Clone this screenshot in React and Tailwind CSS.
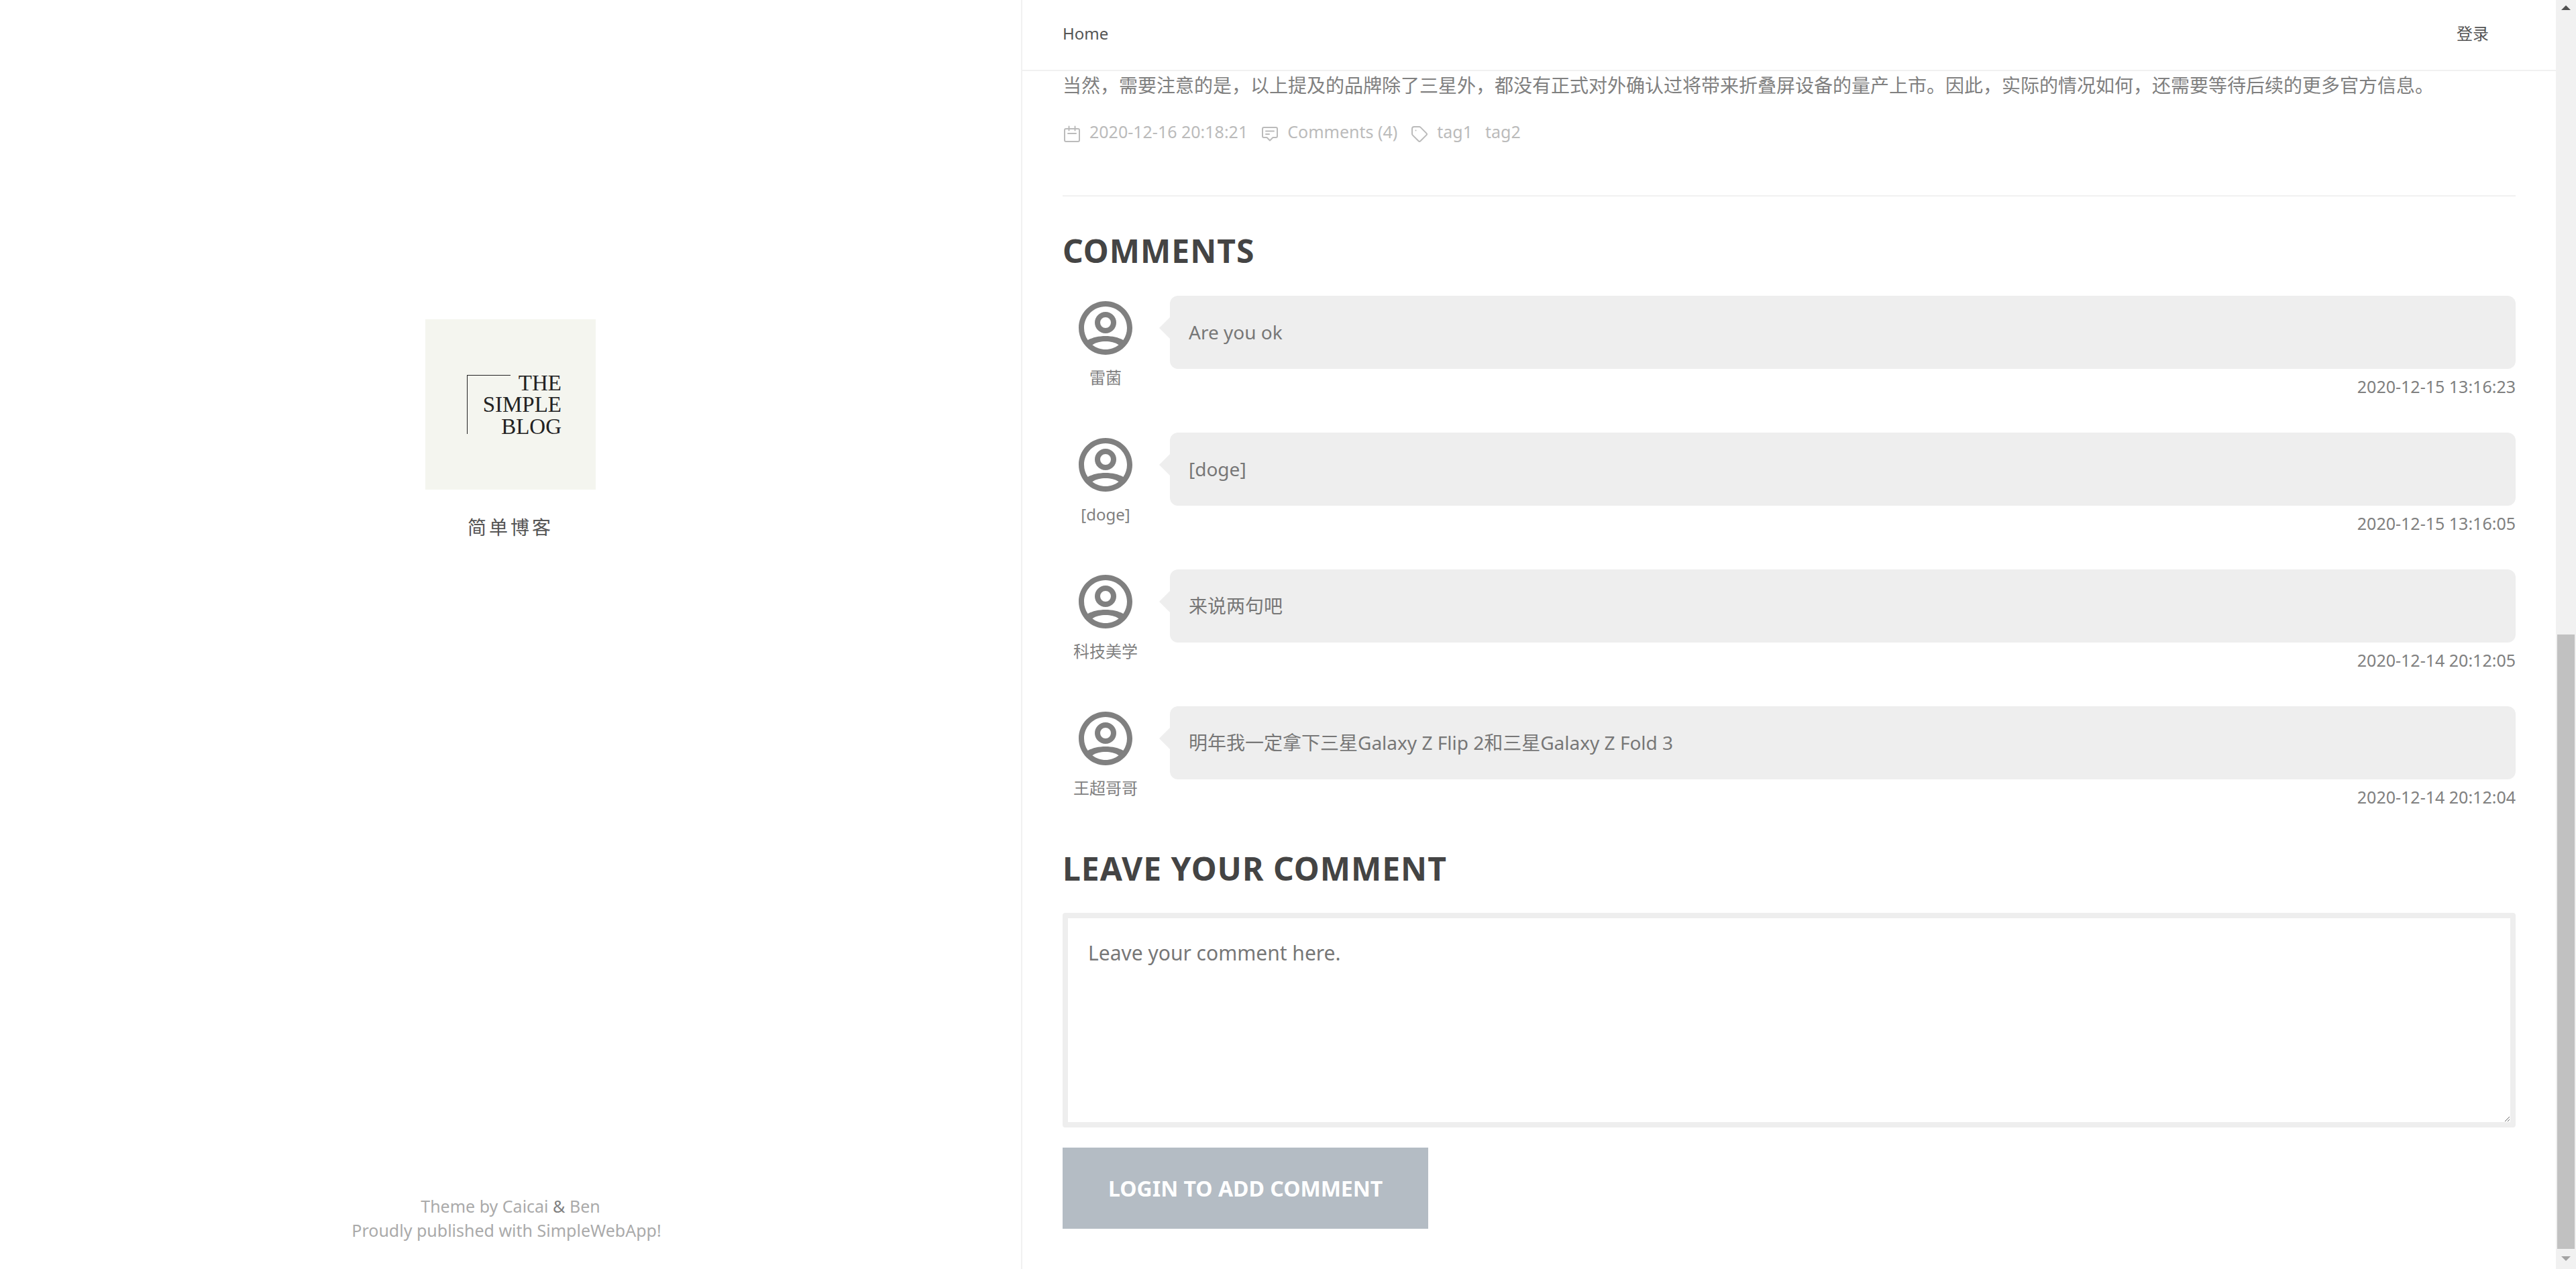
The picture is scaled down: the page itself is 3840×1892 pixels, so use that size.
const comments = [
  { name: "雷菌", text: "Are you ok", date: "2020-12-15 13:16:23" },
  { name: "[doge]", text: "[doge]", date: "2020-12-15 13:16:05" },
  { name: "科技美学", text: "来说两句吧", date: "2020-12-14 20:12:05" },
  { name: "王超哥哥", text: "明年我一定拿下三星Galaxy Z Flip 2和三星Galaxy Z Fold 3", date: "2020-12-14 20:12:04" },
];

function Logo() {
  return (
    <svg viewBox="0 0 254 254" className="w-[254px] bg-[#f4f5ef]" role="img" aria-label="The Simple Blog">
      <path d="M62.500 171V83.500H127" fill="none" stroke="#222" strokeWidth="1.2" shapeRendering="crispEdges" />
      <g className="font-['Liberation_Serif',serif] text-[33px]" fill="#222" textAnchor="end">
        <text x="203" y="106">THE</text>
        <text x="203" y="138">SIMPLE</text>
        <text x="203" y="171">BLOG</text>
      </g>
    </svg>
  );
}

function MetaIcon({ children }) {
  return (
    <svg
      viewBox="0 0 28 28"
      className="mt-2 mr-3 size-7 shrink-0"
      fill="none"
      stroke="currentColor"
      strokeWidth="2"
      strokeLinecap="round"
      strokeLinejoin="round"
      aria-hidden="true"
    >
      {children}
    </svg>
  );
}

function Avatar() {
  return (
    <svg viewBox="0 0 24 24" className="size-24" fill="currentColor" aria-hidden="true">
      <path
        fillRule="evenodd"
        d="M12 2C6.48 2 2 6.48 2 12s4.48 10 10 10 10-4.48 10-10S17.52 2 12 2zM7.1 18.3C8.4 17.4 10.2 17 12 17s3.6.4 4.9 1.3C15.5 19.4 13.8 20 12 20s-3.5-.6-4.900-1.700zM18.6 16.500C16.8 15.500 14.5 15 12 15s-4.800.5-6.600 1.500C4.5 15.2 4 13.700 4 12c0-4.420 3.580-8 8-8s8 3.580 8 8c0 1.700-.5 3.200-1.400 4.500z"
      />
      <circle cx="12" cy="10" r="3" fill="none" stroke="currentColor" strokeWidth="2" />
    </svg>
  );
}

function Comment({ name, text, date }) {
  return (
    <li className="flex gap-8">
      <div className="flex w-32 shrink-0 flex-col items-center">
        <Avatar />
        <p className="mt-2 text-2xl/9">{name}</p>
      </div>
      <div className="min-w-0 flex-1">
        <div className="relative rounded-xl bg-[#eee] px-7 py-8 text-[28px]/[45px] text-[#777]">
          <span className="absolute top-8 -left-4 border-y-16 border-r-16 border-y-transparent border-r-[#eee]" />
          {text}
        </div>
        <p className="mt-2 text-right text-[25px]/9">{date}</p>
      </div>
    </li>
  );
}

function Scrollbar() {
  return (
    <div className="sticky top-0 flex h-screen w-[30px] shrink-0 flex-col items-center bg-[#f1f1f1]" aria-hidden="true">
      <svg viewBox="0 0 30 30" className="w-[30px]" fill="#505050">
        <path d="M8 15h14l-7-7z" />
      </svg>
      <div className="flex w-[26px] flex-1 flex-col justify-end">
        <div className="h-1/2 bg-[#c1c1c1]" />
      </div>
      <svg viewBox="0 0 30 30" className="w-[30px]" fill="#a3a3a3">
        <path d="M8 11h14l-7 7z" />
      </svg>
    </div>
  );
}

export default function App() {
  return (
    <div className="flex min-h-screen bg-white font-['Noto_Sans','Noto_Sans_CJK_SC',sans-serif] text-[#808080]">
      <div className="flex min-w-0 flex-1">
        <aside className="sticky top-0 flex h-screen w-2/5 flex-col items-center border-r-2 border-[#f1f1f1] pt-[476px] pb-10">
          <Logo />
          <h1 className="mt-[34px] text-[28px]/11 tracking-[4px] text-[#555]">简单博客</h1>
          <footer className="mt-auto text-center text-[25px]/9 text-[#aaa]">
            <p>
              <a href="#theme">Theme by Caicai</a> <span className="text-[#808080]">&amp;</span> <a href="#ben">Ben</a>
            </p>
            <p className="pr-3">
              <a href="#app">Proudly published with SimpleWebApp!</a>
            </p>
          </footer>
        </aside>

        <div className="min-w-0 flex-1">
          <header className="sticky top-0 z-10 flex items-center justify-between border-b-2 border-[#f1f1f1] bg-white pt-7 pr-25 pb-8 pl-15 text-2xl/11 text-[#555]">
            <a href="#home">Home</a>
            <a href="#login">登录</a>
          </header>

          <main className="px-15 pb-15">
            <article className="border-b-2 border-[#f1f1f1] pb-[77px]">
              <p className="text-[28px]/[42px]">
                当然，需要注意的是，以上提及的品牌除了三星外，都没有正式对外确认过将带来折叠屏设备的量产上市。因此，实际的情况如何，还需要等待后续的更多官方信息。
              </p>
              <div className="mt-[30px] flex items-start gap-[19px] text-[25px]/9 text-[#bbb]">
                <span className="flex">
                  <MetaIcon>
                    <rect x="3" y="6" width="22" height="19" rx="2" />
                    <path d="M9.5 2.5v6M18.5 2.5v6M8 13h12" />
                  </MetaIcon>
                  2020-12-16 20:18:21
                </span>
                <a href="#comments" className="flex">
                  <MetaIcon>
                    <path d="M5 4h18a2 2 0 0 1 2 2v11a2 2 0 0 1-2 2h-4.500l-4.500 4.500L9.500 19H5a2 2 0 0 1-2-2V6a2 2 0 0 1 2-2zM8 9.500h12M8 14h5" />
                  </MetaIcon>
                  Comments (4)
                </a>
                <a href="#tag1" className="flex">
                  <MetaIcon>
                    <path d="M6 3h7.500a3 3 0 0 1 2.100.9l8.700 8.700a2 2 0 0 1 0 2.800l-8.900 8.900a2 2 0 0 1-2.800 0l-8.700-8.700A3 3 0 0 1 3 13.500V6a3 3 0 0 1 3-3z" />
                    <path d="M8.500 8.500h.01" />
                  </MetaIcon>
                  tag1
                </a>
                <a href="#tag2">tag2</a>
              </div>
            </article>

            <section id="comments">
              <h2 className="mt-[51px] text-5xl/15 font-bold tracking-[1px] text-[#444]">COMMENTS</h2>
              <ul className="mt-[37px] flex flex-col gap-[51px]">
                {comments.map((c) => (
                  <Comment key={c.date} {...c} />
                ))}
              </ul>
            </section>

            <form onSubmit={(e) => e.preventDefault()}>
              <h2 className="mt-[59px] text-5xl/15 font-bold tracking-[1px] text-[#444]">
                <label htmlFor="comment">LEAVE YOUR COMMENT</label>
              </h2>
              <textarea
                id="comment"
                placeholder="Leave your comment here."
                className="mt-9 block h-80 w-full rounded border-8 border-[#eee] p-[30px] text-[30px]/11 placeholder:text-[#777]"
              />
              <button type="submit" className="mt-[30px] bg-[#b4bcc4] px-17 py-[38px] text-[32px]/[45px] font-bold text-white">
                LOGIN TO ADD COMMENT
              </button>
            </form>
          </main>
        </div>
      </div>
      <Scrollbar />
    </div>
  );
}
